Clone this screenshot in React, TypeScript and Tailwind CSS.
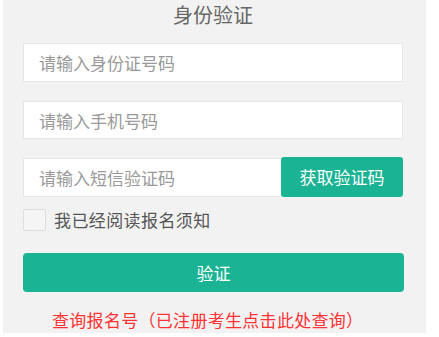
import { useState } from 'react'

export default function App() {
  const [agreed, setAgreed] = useState(false)

  return (
    <div className="h-[337px] w-[439px] bg-white font-['Noto_Sans_CJK_SC','Noto_Sans',sans-serif]">
      <div className="ml-[3px] h-[333px] w-[423px] bg-[#f2f2f2] pl-[20px]">
        <h1 className="h-[30px] w-[380px] text-center text-[20px] font-normal leading-[30px] text-[#666]">
          身份验证
        </h1>

        <div className="mt-[13px] flex w-[380px] flex-col gap-[19px]">
          <input
            className="h-[39px] w-full border border-[#e6e6e6] bg-white px-[15px] text-[17px] text-[#333] outline-none placeholder:text-[#999]"
            placeholder="请输入身份证号码"
          />
          <input
            className="h-[38px] w-full border border-[#e6e6e6] bg-white px-[15px] text-[17px] text-[#333] outline-none placeholder:text-[#999]"
            placeholder="请输入手机号码"
          />
          <div className="flex h-[39px]">
            <input
              className="h-[39px] w-[258px] border border-r-0 border-[#e6e6e6] bg-white px-[15px] text-[17px] text-[#333] outline-none placeholder:text-[#999]"
              placeholder="请输入短信验证码"
            />
            <button className="-mt-px h-[40px] flex-1 rounded-[3px] bg-[#1ab394] text-[17px] text-white">
              获取验证码
            </button>
          </div>
        </div>

        <label className="mt-[12px] flex h-[22px] items-center gap-[8px]">
          <span
            onClick={() => setAgreed(!agreed)}
            className="h-[22px] w-[23px] rounded-[2px] border border-[#dedede] bg-[#f5f5f5]"
          >
            {agreed && <span className="block text-center text-[14px] leading-[20px] text-[#1ab394]">✓</span>}
          </span>
          <span className="text-[17px] tracking-[0.4px] text-[#555]">我已经阅读报名须知</span>
        </label>

        <button className="mt-[22px] h-[39px] w-[381px] rounded-[4px] bg-[#1ab394] text-[17px] text-white">
          验证
        </button>

        <p className="mt-[16px] pl-[29px] text-[17px] leading-[24px] tracking-[0.3px] text-[#ff3333]">
          查询报名号（已注册考生点击此处查询）
        </p>
      </div>
    </div>
  )
}
